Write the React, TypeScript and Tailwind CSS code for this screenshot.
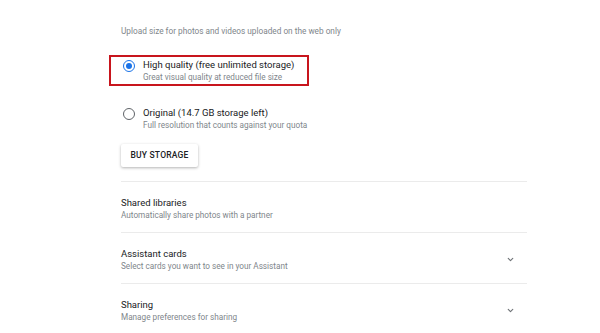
import { ChevronDown } from "lucide-react";

type RowProps = {
    title: string;
    subtitle: string;
    expandable?: boolean;
};

const Radio = ({ checked }: { checked?: boolean }) => (
    <div
        className={`w-[12px] h-[12px] rounded-full border-[1.5px] flex items-center justify-center shrink-0 ${
            checked ? "border-[#1a73e8]" : "border-[#5f6368]"
        }`}
    >
        {checked && <div className="w-[6px] h-[6px] rounded-full bg-[#1a73e8]" />}
    </div>
);

const SettingRow = ({ title, subtitle, expandable }: RowProps) => (
    <div className="flex items-center justify-between h-[51px] pt-[3px] border-t border-[#ebebeb]">
        <div className="flex flex-col">
            <span className="text-[9.5px] leading-[12px] text-[#202124]">{title}</span>
            <span className="text-[8.2px] leading-[12px] text-[#80868b]">{subtitle}</span>
        </div>
        {expandable && <ChevronDown className="w-[9px] h-[9px] mr-[12px] text-[#6f7377]" strokeWidth={3} />}
    </div>
);

const App = () => {
    return (
        <div
            className="w-[600px] h-[333px] bg-white overflow-hidden pl-[121px] pr-[73px]"
            style={{ fontFamily: "Roboto, 'Liberation Sans', sans-serif" }}
        >
            <p className="pt-[26px] text-[8.25px] leading-[10px] text-[#80868b]">
                Upload size for photos and videos uploaded on the web only
            </p>

            {/* highlighted option */}
            <div className="mt-[19px] -ml-[12px] w-[200px] h-[31px] border-2 border-[#c8151d] flex items-center pl-[12px]">
                <div className="flex items-start gap-[8px]">
                    <div className="pt-[1px]">
                        <Radio checked />
                    </div>
                    <div className="flex flex-col">
                        <span className="text-[9.5px] leading-[12px] text-[#202124]">
                            High quality (free unlimited storage)
                        </span>
                        <span className="text-[8.2px] leading-[12px] text-[#80868b]">
                            Great visual quality at reduced file size
                        </span>
                    </div>
                </div>
            </div>

            <div className="mt-[21px] flex items-start gap-[8px] pl-[2px]">
                <div className="pt-[1px]">
                    <Radio />
                </div>
                <div className="flex flex-col">
                    <span className="text-[9.5px] leading-[12px] text-[#202124]">
                        Original (14.7 GB storage left)
                    </span>
                    <span className="text-[8.2px] leading-[12px] text-[#80868b]">
                        Full resolution that counts against your quota
                    </span>
                </div>
            </div>

            <button className="mt-[13px] w-[77px] h-[23px] rounded-[2px] bg-white shadow-[0_1px_3px_rgba(0,0,0,0.3)] text-[8.5px] font-medium text-[#202124] tracking-[0.2px]">
                BUY STORAGE
            </button>

            <div className="mt-[14px]">
                <SettingRow title="Shared libraries" subtitle="Automatically share photos with a partner" />
                <SettingRow title="Assistant cards" subtitle="Select cards you want to see in your Assistant" expandable />
                <SettingRow title="Sharing" subtitle="Manage preferences for sharing" expandable />
            </div>
        </div>
    );
};

export default App;
